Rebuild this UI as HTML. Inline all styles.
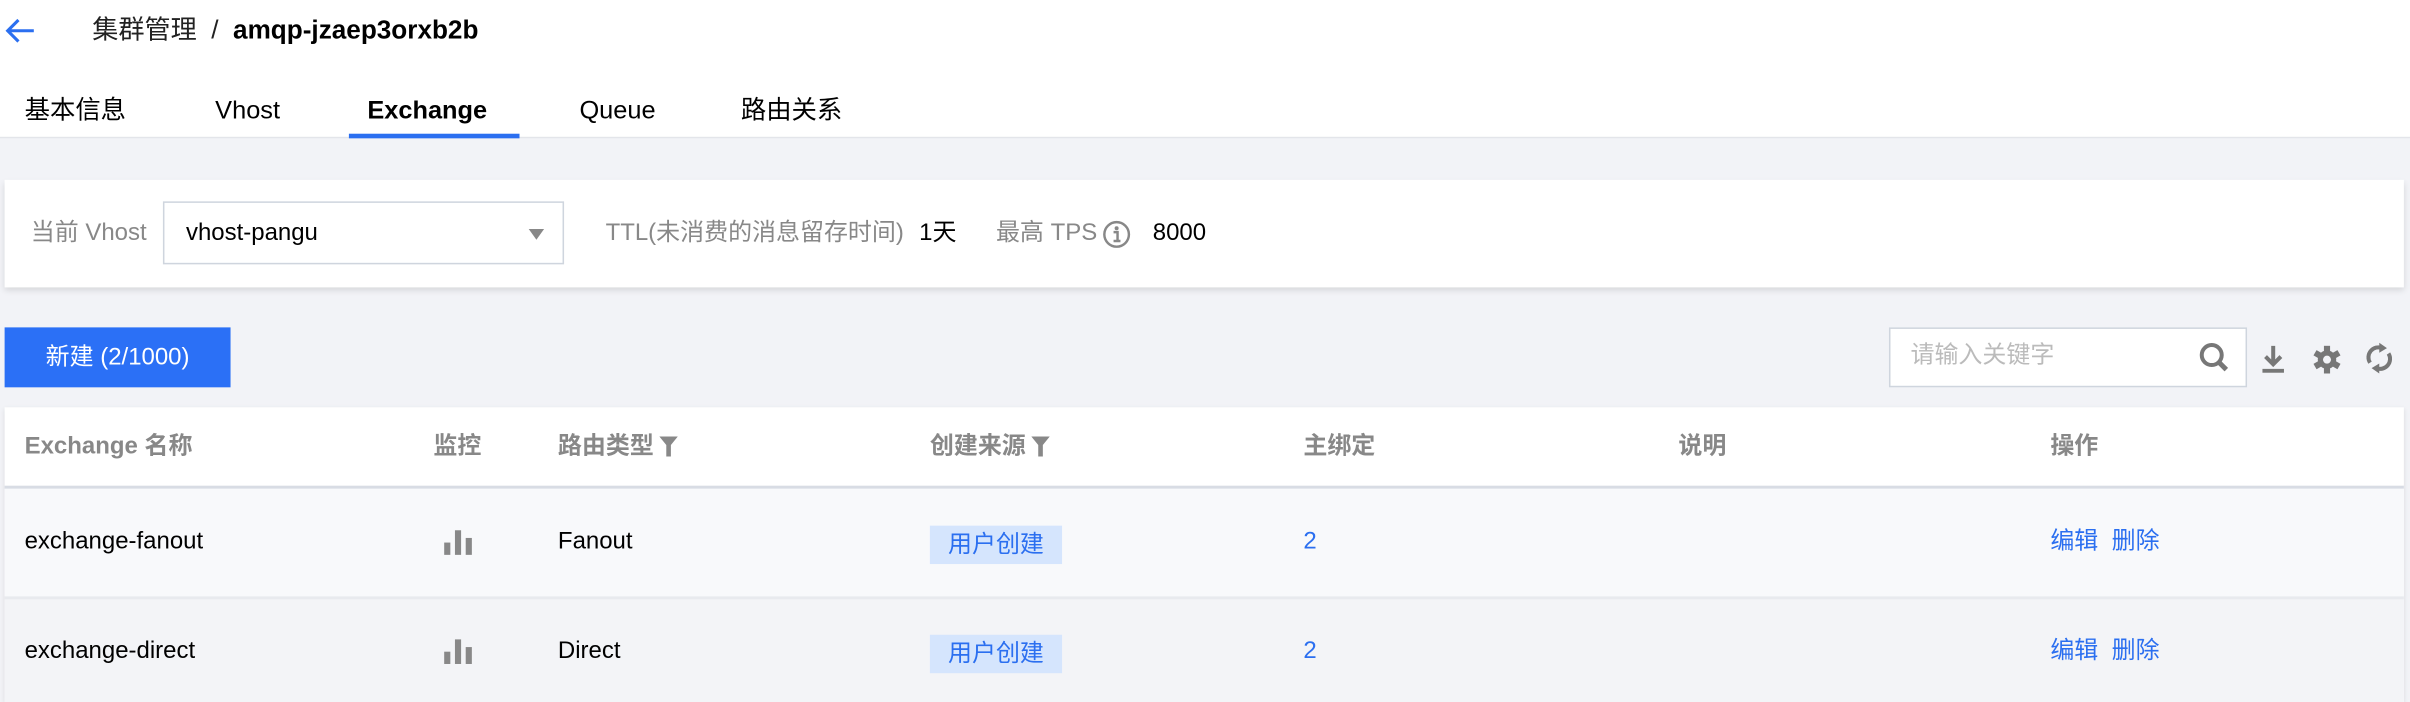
<!DOCTYPE html>
<html><head><meta charset="utf-8"><style>
*{margin:0;padding:0;box-sizing:border-box}
html,body{width:2410px;height:702px;overflow:hidden;background:#f2f3f7}
#w{position:absolute;left:0;top:0;width:1568px;height:457px;transform:scale(1.53699);transform-origin:0 0;font-family:"Liberation Sans","Noto Sans CJK SC",sans-serif;color:#000;font-size:15.6px}
.a{position:absolute;white-space:nowrap;line-height:20px}
.hdr{position:absolute;left:0;top:0;width:1568px;height:90px;background:#fff;border-bottom:1px solid #e3e5ea}
.g{color:#888}
.b{color:#2b6ff0}
.th{color:#888;font-weight:bold}
.f{display:inline-block;vertical-align:middle;margin-left:4px}
</style></head><body><div id="w">
<div class="hdr"></div>
<svg class="a" style="left:3px;top:11px" width="20" height="18" viewBox="0 0 20 18"><path d="M19 9H2M9 2L2 9l7 7" fill="none" stroke="#2b6ff0" stroke-width="2"/></svg>
<div class="a" style="left:60px;top:10px;font-size:17px;color:#222">集群管理 &nbsp;/&nbsp; <b style="color:#000">amqp-jzaep3orxb2b</b></div>
<div class="a" style="left:16px;top:62px;font-size:16.5px">基本信息</div>
<div class="a" style="left:140px;top:62px;font-size:16.5px">Vhost</div>
<div class="a" style="left:239px;top:62px;font-size:16.5px;font-weight:bold">Exchange</div>
<div class="a" style="left:377px;top:62px;font-size:16.5px">Queue</div>
<div class="a" style="left:482px;top:62px;font-size:16.5px">路由关系</div>
<div class="a" style="left:227px;top:87px;width:111px;height:3px;background:#2b6ff0"></div>

<div class="a" style="left:3px;top:117px;width:1561px;height:70px;background:#fff;box-shadow:0 2px 4px rgba(0,0,0,.12)"></div>
<div class="a g" style="left:20px;top:142px">当前 Vhost</div>
<div class="a" style="left:106px;top:131px;width:261px;height:41px;border:1px solid #cfd5de;background:#fff"></div>
<div class="a" style="left:121px;top:142px">vhost-pangu</div>
<div class="a" style="left:344px;top:149px;width:0;height:0;border-left:5px solid transparent;border-right:5px solid transparent;border-top:7px solid #888"></div>
<div class="a g" style="left:394px;top:142px">TTL(未消费的消息留存时间)</div>
<div class="a" style="left:598px;top:142px">1天</div>
<div class="a g" style="left:648px;top:142px">最高 TPS</div>
<svg class="a" style="left:717px;top:143px" width="19" height="19" viewBox="0 0 19 19"><circle cx="9.5" cy="9.5" r="8" fill="none" stroke="#888" stroke-width="1.6"/><circle cx="9.5" cy="5.5" r="1.3" fill="#888"/><path d="M7.5 8h2.6v5.5M7.5 13.8h4.5" fill="none" stroke="#888" stroke-width="1.6"/></svg>
<div class="a" style="left:750px;top:142px">8000</div>

<div class="a" style="left:3px;top:213px;width:147px;height:39px;background:#2b70f6;color:#fff;text-align:center;line-height:39px">新建 (2/1000)</div>
<div class="a" style="left:1229px;top:213px;width:233px;height:39px;background:#fff;border:1px solid #cfd5de"></div>
<div class="a" style="left:1243px;top:222px;color:#bbb">请输入关键字</div>
<svg class="a" style="left:1430px;top:222px" width="22" height="22" viewBox="0 0 22 22"><circle cx="9" cy="9" r="6.5" fill="none" stroke="#777" stroke-width="2.6"/><path d="M13.5 13.5l5 5" stroke="#777" stroke-width="3.2"/></svg>
<svg class="a" style="left:1470px;top:224px" width="18" height="20" viewBox="0 0 18 20"><path d="M9 1v11M4 8l5 5 5-5" fill="none" stroke="#777" stroke-width="2.6"/><rect x="2" y="16" width="14" height="2.5" fill="#777"/></svg>
<svg class="a" style="left:1504px;top:224px" width="20" height="20" viewBox="0 0 20 20"><g fill="#777"><circle cx="10" cy="10" r="6"/><rect x="8" y="1" width="4" height="18"/><rect x="8" y="1" width="4" height="18" transform="rotate(60 10 10)"/><rect x="8" y="1" width="4" height="18" transform="rotate(120 10 10)"/></g><circle cx="10" cy="10" r="2.6" fill="#f2f3f7"/></svg>
<svg class="a" style="left:1538px;top:222px" width="20" height="22" viewBox="0 0 20 22"><path d="M4 14A6.5 6.5 0 0 1 12 4.5M16 8A6.5 6.5 0 0 1 8 17.5" fill="none" stroke="#777" stroke-width="2.6"/><path d="M10 1l5 3.5-5 3z M10 21l-5-3.5 5-3z" fill="#777"/></svg>

<div class="a" style="left:3px;top:265px;width:1561px;height:192px;background:#fff;box-shadow:0 1px 3px rgba(0,0,0,.1)"></div>
<div class="a" style="left:3px;top:316px;width:1561px;height:2px;background:#d8dce4"></div>
<div class="a" style="left:3px;top:318px;width:1561px;height:70px;background:#f8f9fb"></div>
<div class="a" style="left:3px;top:388px;width:1561px;height:2px;background:#e8eaee"></div>
<div class="a" style="left:3px;top:390px;width:1561px;height:67px;background:#f3f4f7"></div>

<div class="a th" style="left:16px;top:281px">Exchange 名称</div>
<div class="a th" style="left:282px;top:281px">监控</div>
<div class="a th" style="left:363px;top:281px">路由类型<svg class="f" width="12" height="13" viewBox="0 0 12 13"><path d="M0 0h12L7.5 5.5V13h-3V5.5z" fill="#888"/></svg></div>
<div class="a th" style="left:605px;top:281px">创建来源<svg class="f" width="12" height="13" viewBox="0 0 12 13"><path d="M0 0h12L7.5 5.5V13h-3V5.5z" fill="#888"/></svg></div>
<div class="a th" style="left:848px;top:281px">主绑定</div>
<div class="a th" style="left:1092px;top:281px">说明</div>
<div class="a th" style="left:1334px;top:281px">操作</div>

<div class="a" style="left:16px;top:343px">exchange-fanout</div>
<svg class="a" style="left:288px;top:344px" width="20" height="18" viewBox="0 0 20 18"><rect x="1" y="9" width="4" height="8" fill="#888"/><rect x="8" y="1" width="4" height="16" fill="#888"/><rect x="15" y="6" width="4" height="11" fill="#888"/></svg>
<div class="a" style="left:363px;top:343px">Fanout</div>
<div class="a b" style="left:605px;top:342px;width:86px;height:25px;background:#d5e5fd;text-align:center;line-height:25px">用户创建</div>
<div class="a b" style="left:848px;top:343px">2</div>
<div class="a b" style="left:1334px;top:343px">编辑 &nbsp;删除</div>

<div class="a" style="left:16px;top:414px">exchange-direct</div>
<svg class="a" style="left:288px;top:415px" width="20" height="18" viewBox="0 0 20 18"><rect x="1" y="9" width="4" height="8" fill="#888"/><rect x="8" y="1" width="4" height="16" fill="#888"/><rect x="15" y="6" width="4" height="11" fill="#888"/></svg>
<div class="a" style="left:363px;top:414px">Direct</div>
<div class="a b" style="left:605px;top:413px;width:86px;height:25px;background:#d5e5fd;text-align:center;line-height:25px">用户创建</div>
<div class="a b" style="left:848px;top:414px">2</div>
<div class="a b" style="left:1334px;top:414px">编辑 &nbsp;删除</div>
</div></body></html>
